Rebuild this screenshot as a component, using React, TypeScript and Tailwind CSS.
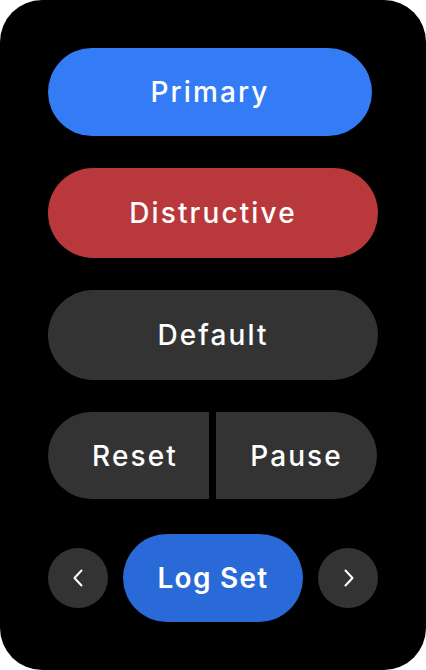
const font = { fontFamily: "Inter, 'Noto Sans', sans-serif" };

function Chevron({ dir }: { dir: "left" | "right" }) {
  return (
    <svg width="10" height="18" viewBox="0 0 10 18" fill="none" stroke="currentColor" strokeWidth="2" strokeLinecap="round" strokeLinejoin="round">
      {dir === "left" ? <polyline points="8.5,1.5 1.5,9 8.5,16.5" /> : <polyline points="1.5,1.5 8.5,9 1.5,16.5" />}
    </svg>
  );
}

export default function App() {
  return (
    <div className="h-[670px] w-[426px] bg-white" style={font}>
      <div className="flex h-full w-full flex-col rounded-[42px] bg-black pl-[48px] pt-[48px] text-white">
        <button className="flex h-[88px] w-[324px] items-center justify-center rounded-full bg-[#347bf6] text-[28px] font-medium tracking-[0.075em]">
          Primary
        </button>

        <button className="mt-[32px] flex h-[90px] w-[330px] items-center justify-center rounded-full bg-[#b9383b] text-[28px] font-medium tracking-[0.075em]">
          Distructive
        </button>

        <button className="mt-[32px] flex h-[90px] w-[330px] items-center justify-center rounded-full bg-[#333333] text-[28px] font-medium tracking-[0.075em]">
          Default
        </button>

        <div className="mt-[32px] flex h-[87px] w-[329px] gap-[7px]">
          <button className="flex w-[161px] items-center justify-center rounded-l-full rounded-r-[5px] bg-[#333333] pl-[13px] text-[28px] font-medium tracking-[0.075em]">
            Reset
          </button>
          <button className="flex w-[161px] items-center justify-center rounded-l-[5px] rounded-r-full bg-[#333333] text-[28px] font-medium tracking-[0.075em]">
            Pause
          </button>
        </div>

        <div className="mt-[35px] flex h-[88px] w-[330px] items-center justify-between">
          <button className="flex h-[60px] w-[60px] items-center justify-center rounded-full bg-[#333333] pr-[1px]">
            <Chevron dir="left" />
          </button>
          <button className="flex h-[88px] w-[180px] items-center justify-center rounded-full bg-[#2a69d8] text-[28px] font-semibold tracking-[0.045em]">
            Log Set
          </button>
          <button className="flex h-[60px] w-[60px] items-center justify-center rounded-full bg-[#333333] pl-[1px]">
            <Chevron dir="right" />
          </button>
        </div>
      </div>
    </div>
  );
}
